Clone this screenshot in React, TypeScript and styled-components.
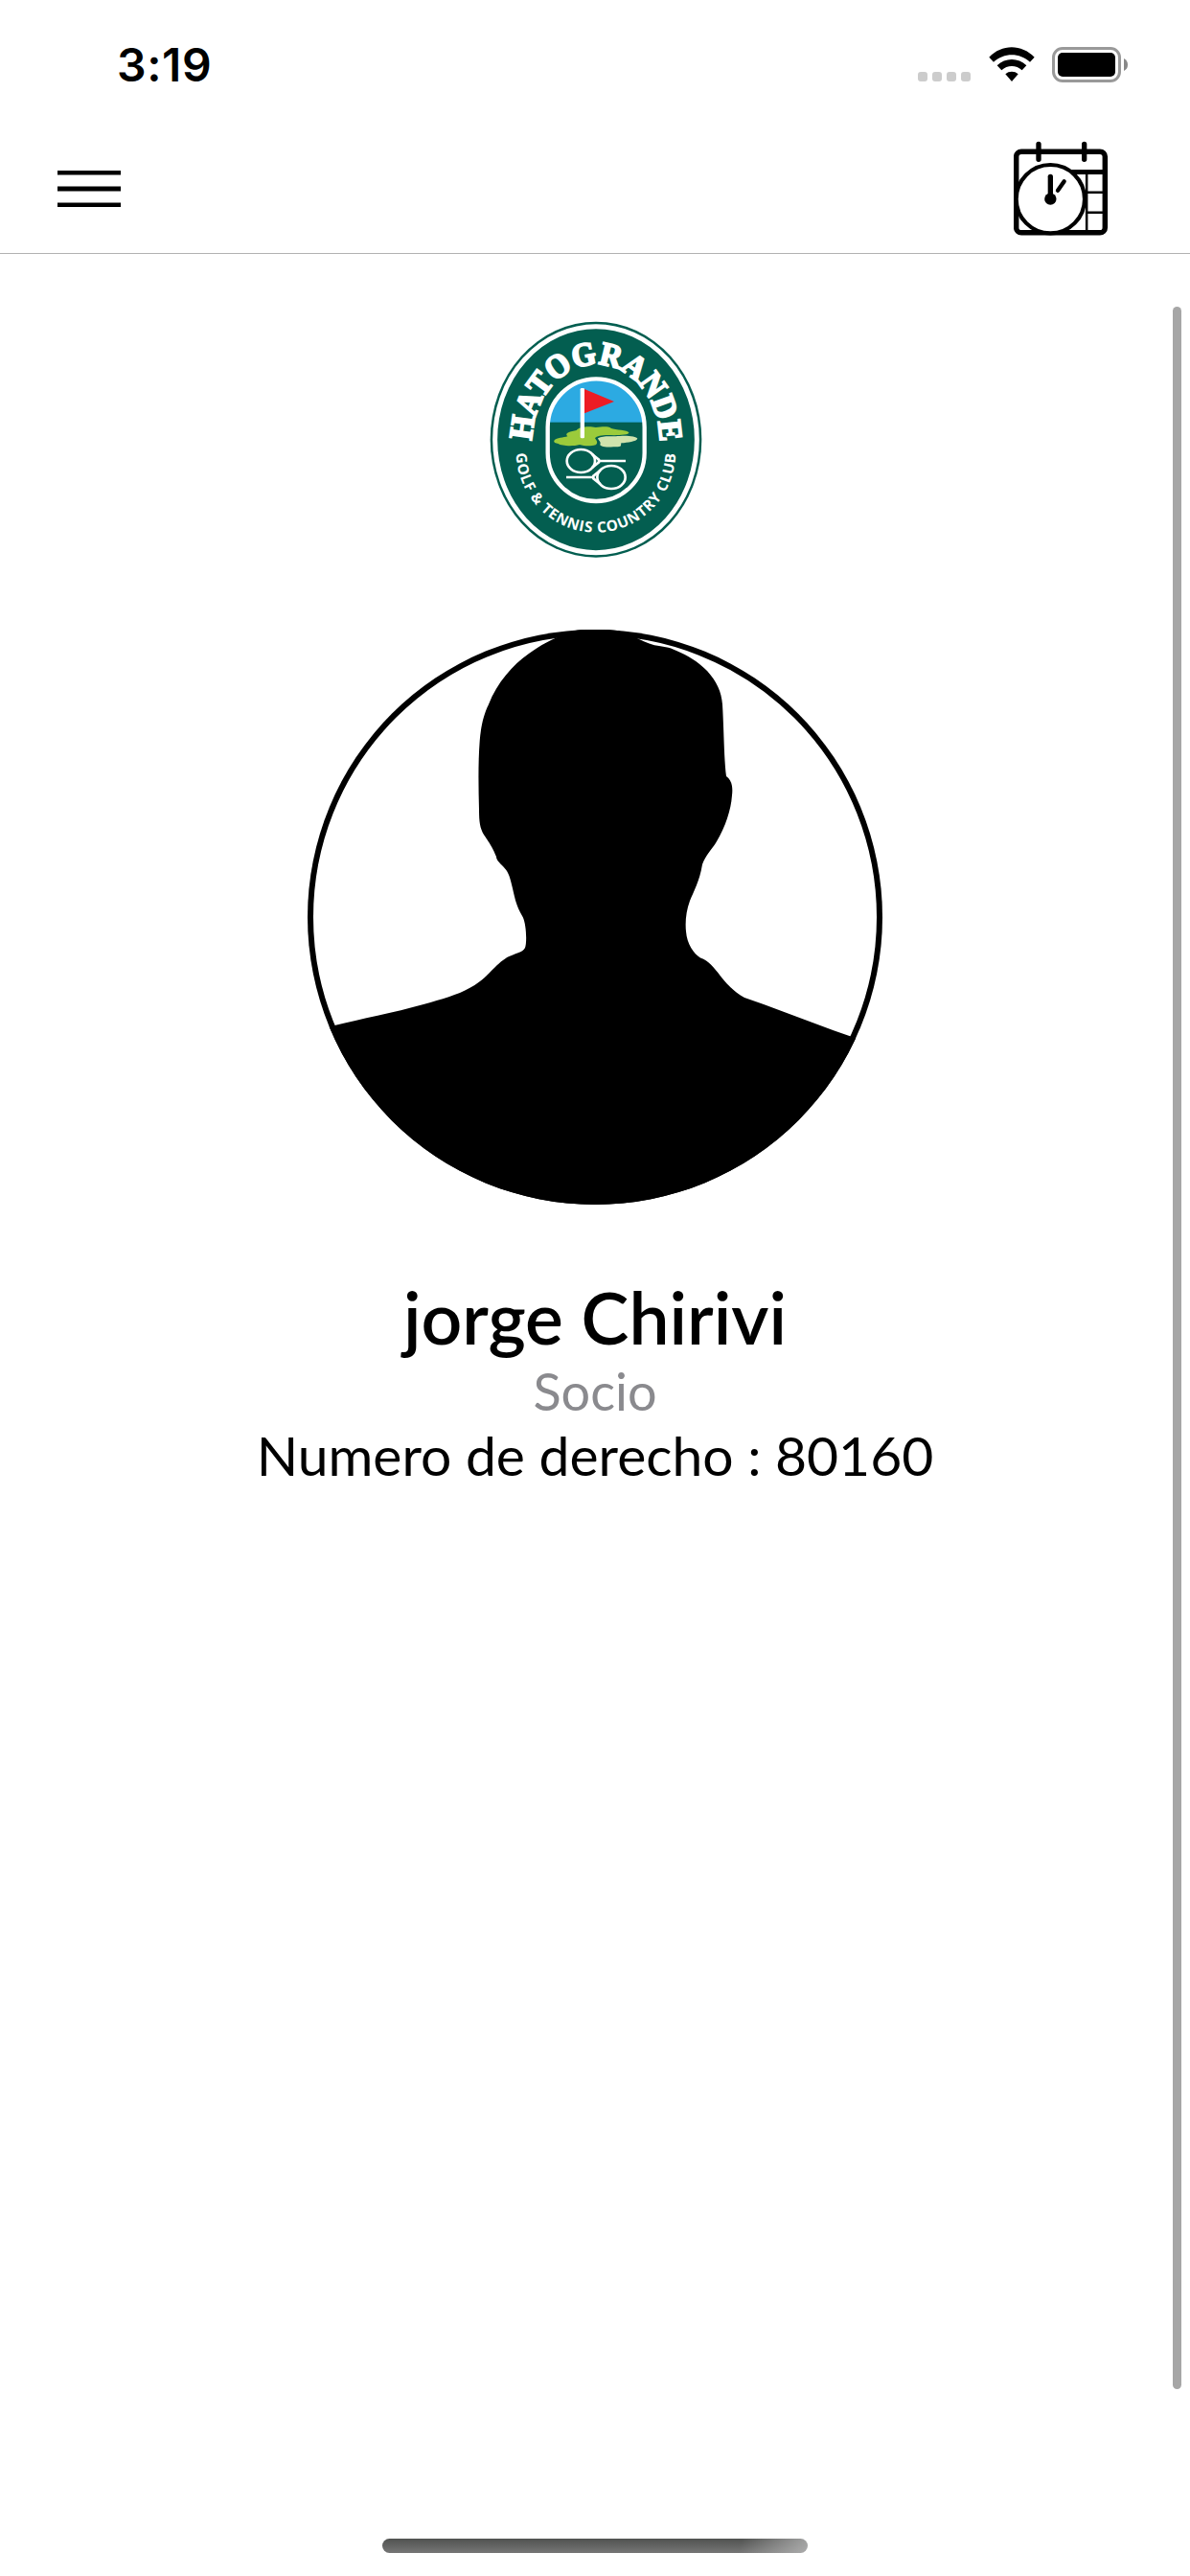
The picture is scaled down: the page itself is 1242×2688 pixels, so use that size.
import React from 'react';
import styled, { createGlobalStyle } from 'styled-components';

const COLORS = {
  black: '#000000',
  white: '#ffffff',
  gray: '#8a8a8e',
  line: '#b2b2b2',
  scroll: '#a6a6a6',
  green: '#035e50',
};

const GlobalStyle = createGlobalStyle`
  * {
    box-sizing: border-box;
  }
  body {
    margin: 0;
    background: ${COLORS.white};
  }
`;

const Screen = styled.div`
  position: relative;
  display: flex;
  flex-direction: column;
  width: 1242px;
  height: 2688px;
  overflow: hidden;
  background: ${COLORS.white};
  color: ${COLORS.black};
  font-family: Lato, 'Open Sans', sans-serif;
`;

const StatusBar = styled.div`
  display: flex;
  justify-content: space-between;
  height: 132px;
  padding: 39px 65px 0 122px;
`;

const Time = styled.span`
  font-family: Inter, 'Liberation Sans', sans-serif;
  font-weight: 600;
  font-size: 48px;
  line-height: 58px;
  letter-spacing: 0.6px;
`;

const StatusIcons = styled.div`
  display: flex;
  align-items: flex-start;
  padding-top: 10px;

  & > svg:last-child {
    margin-left: 18px;
  }
`;

const SignalDots = styled.div`
  display: flex;
  gap: 5px;
  margin: 26px 19px 0 0;
`;

const Dot = styled.span`
  width: 10px;
  height: 10px;
  border-radius: 3px;
  background: #cccccc;
`;

const Header = styled.header`
  display: flex;
  justify-content: space-between;
  align-items: flex-start;
  height: 133px;
  padding: 14px 84px 0 60px;
  border-bottom: 1px solid ${COLORS.line};
`;

const MenuButton = styled.button`
  margin: 32px 0 0;
  padding: 0;
  border: none;
  background: none;
  line-height: 0;
`;

const Content = styled.main`
  flex: 1;
  display: flex;
  flex-direction: column;
  align-items: center;
  padding-top: 60px;
`;

const Avatar = styled.div`
  width: 600px;
  height: 600px;
  margin: 67px 0 72px;
  border-radius: 50%;
  overflow: hidden;

  & > svg {
    display: block;
  }
`;

const Name = styled.h1`
  margin: 0;
  font-weight: 600;
  font-size: 75px;
  line-height: 90px;
`;

const Role = styled.p`
  margin: 0;
  color: ${COLORS.gray};
  font-size: 54px;
  line-height: 65px;
`;

const MemberNumber = styled.p`
  margin: 0;
  font-size: 57px;
  line-height: 68px;
`;

const ScrollThumb = styled.div`
  position: absolute;
  top: 320px;
  right: 9px;
  width: 9px;
  height: 2173px;
  border-radius: 5px;
  background: ${COLORS.scroll};
`;

const HomeArea = styled.footer`
  display: flex;
  justify-content: center;
  height: 39px;
`;

const HomeIndicator = styled.div`
  width: 444px;
  height: 15px;
  border-radius: 8px;
  background:
    linear-gradient(100deg, transparent 84%, rgba(190, 190, 190, 0.75) 100%),
    linear-gradient(#505250, #767676);
`;

const WifiIcon = () => (
  <svg width="48" height="37" viewBox="0 0 144 111">
    <path d="M1 32 C40 -10 103 -10 143 32 L129 47 C97 17 47 17 15 47 Z" />
    <path d="M26 58 C52 33 92 33 118 58 L104 73 C86 56 58 56 40 73 Z" />
    <path d="M52 85 C63 75 81 75 92 85 L72 108 Z" />
  </svg>
);

const BatteryIcon = () => (
  <svg width="79" height="37" viewBox="0 0 79 37">
    <rect x="1.5" y="1.5" width="69" height="34" rx="9.5" fill="none" stroke="#999" strokeWidth="3" />
    <rect x="6" y="6" width="60" height="25" rx="5" />
    <path d="M75 12 Q79 14 79 18.5 Q79 23 75 25 Z" fill="#888" />
  </svg>
);

const MenuIcon = () => (
  <svg width="66" height="38" viewBox="0 0 66 38">
    <path d="M0 0H66V4.5H0Z M0 16.5H66V21.5H0Z M0 33.5H66V38H0Z" />
  </svg>
);

const CalendarIcon = () => (
  <svg width="100" height="102" viewBox="84 48 300 306" fill="none" stroke="#000">
    <rect x="92" y="84.5" width="278" height="254" rx="16" strokeWidth="16.5" />
    <path d="M162 61V109M305 61V109" strokeWidth="16" strokeLinecap="round" />
    <path d="M262 148.5H366" strokeWidth="15" />
    <path d="M312.5 150V334M312 212H364M312 275H364" strokeWidth="7.5" />
    <circle cx="199" cy="233" r="107" strokeWidth="12.5" fill="#fff" />
    <path d="M199 163V233" strokeWidth="16" strokeLinecap="round" />
    <path d="M242 178L222 206" strokeWidth="13" strokeLinecap="round" />
    <circle cx="199" cy="233" r="18.5" fill="#000" stroke="none" />
  </svg>
);

const ClubLogo = () => (
  <svg width="240" height="265" viewBox="0 0 720 795">
    <defs>
      <clipPath id="badge">
        <rect x="212" y="211" width="303" height="383" rx="151.5" />
      </clipPath>
      <path id="upperArc" d="M163 409 A200 243 0 0 1 563 409" />
      <path id="lowerArc" d="M113 438 A250 254 0 0 0 613 438" />
    </defs>
    <ellipse cx="363" cy="401" rx="331" ry="369" fill={COLORS.green} />
    <ellipse cx="363" cy="401" rx="316" ry="354" fill="none" stroke="#fff" strokeWidth="15" />

    <g clipPath="url(#badge)">
      <rect x="205" y="205" width="320" height="142" fill="#2caae2" />
      <path
        d="M232 404C240 395 262 395 274 391C262 380 285 376 302 372C308 360 345 358 362 363C385 361 400 359 411 366C424 371 462 371 466 379C468 386 440 387 420 388C395 386 366 387 360 397C366 405 370 412 362 418C340 424 325 420 312 417C290 423 255 421 245 414C237 412 230 410 232 404Z"
        fill="#9bcb3b"
      />
      <path
        d="M369 397C385 388 410 391 425 391C450 387 490 389 493 398C490 407 462 410 442 412C440 421 445 424 425 424C400 425 375 424 376 416C380 408 370 404 369 397Z"
        fill="#d0e3ad"
      />
      <rect x="314" y="240" width="13" height="157" rx="4" fill="#fff" />
      <path d="M327 243L420 282L327 319Z" fill="#ec1c24" />
    </g>
    <rect x="212" y="211" width="303" height="383" rx="151.5" fill="none" stroke="#fff" strokeWidth="13" />

    <g fill="none" stroke="#fff" strokeWidth="8">
      <ellipse cx="316" cy="468" rx="44" ry="36" />
      <path d="M350 446L372 464V472L350 490M370 468H456" />
      <ellipse cx="411" cy="519" rx="44" ry="36" />
      <path d="M377 497L355 515V523L377 541M357 519H270" />
    </g>

    <text
      fill="#fff"
      stroke="#fff"
      strokeWidth="6"
      fontFamily="'Liberation Serif', serif"
      fontWeight="700"
      fontSize="104"
    >
      <textPath href="#upperArc" startOffset="4" textLength="692" lengthAdjust="spacingAndGlyphs">
        HATOGRANDE
      </textPath>
    </text>
    <text fill="#fff" fontFamily="'Open Sans', sans-serif" fontWeight="700" fontSize="46">
      <textPath href="#lowerArc" startOffset="6" textLength="778" lengthAdjust="spacing">
        GOLF &amp; TENNIS COUNTRY CLUB
      </textPath>
    </text>
  </svg>
);

const Silhouette = () => (
  <svg width="600" height="600" viewBox="321 657 600 600">
    <path
      d="M321 1077L349.3 1070C377 1063 410 1057 443 1047.7C460 1043 478 1038 490 1031C500 1026 506 1020 516.7 1009.3
      C522 1004 528 999 533.3 997.3C540 994 545 994 548 989C550 984 549.5 965 545.7 957C538 944 537 935 534 923
      C532 914 530 909 525 904C521 900 518 897 518 894C514 884 511 880 505 871C501 864 500 858 500 845
      C499.3 820 499 795 500.7 773C502 757 505 745 510 735C519 712 535 694 552 682C565 673 575 667 587 663
      L621 650L660 663C668 668 676 671 683 673.3C692 675 698 675 706 679C718 684 728 690 738 700
      C748 711 753 722 754 735C755.5 760 755.5 790 758 810C764 814 765 822 764 830C763 845 757 863 748 878
      C744 885 736 893 733 902C730 920 724 930 720 940C716 951 715 962 716 972C717 985 724 995 731 999.5
      C741 1003 746 1011 754 1021C760 1028 767 1036 777 1041L797 1048L870 1075.3L921 1093V1257H321Z"
    />
    <circle cx="621" cy="957" r="298" fill="none" stroke="#000" strokeWidth="8" />
  </svg>
);

const App = () => {
  return (
    <>
      <GlobalStyle />
      <Screen>
        <StatusBar>
          <Time>3:19</Time>
          <StatusIcons>
            <SignalDots>
              <Dot />
              <Dot />
              <Dot />
              <Dot />
            </SignalDots>
            <WifiIcon />
            <BatteryIcon />
          </StatusIcons>
        </StatusBar>

        <Header>
          <MenuButton aria-label="Menu">
            <MenuIcon />
          </MenuButton>
          <CalendarIcon />
        </Header>

        <Content>
          <ClubLogo />
          <Avatar>
            <Silhouette />
          </Avatar>
          <Name>jorge Chirivi</Name>
          <Role>Socio</Role>
          <MemberNumber>Numero de derecho : 80160</MemberNumber>
        </Content>

        <HomeArea>
          <HomeIndicator />
        </HomeArea>
        <ScrollThumb />
      </Screen>
    </>
  );
};

export default App;
